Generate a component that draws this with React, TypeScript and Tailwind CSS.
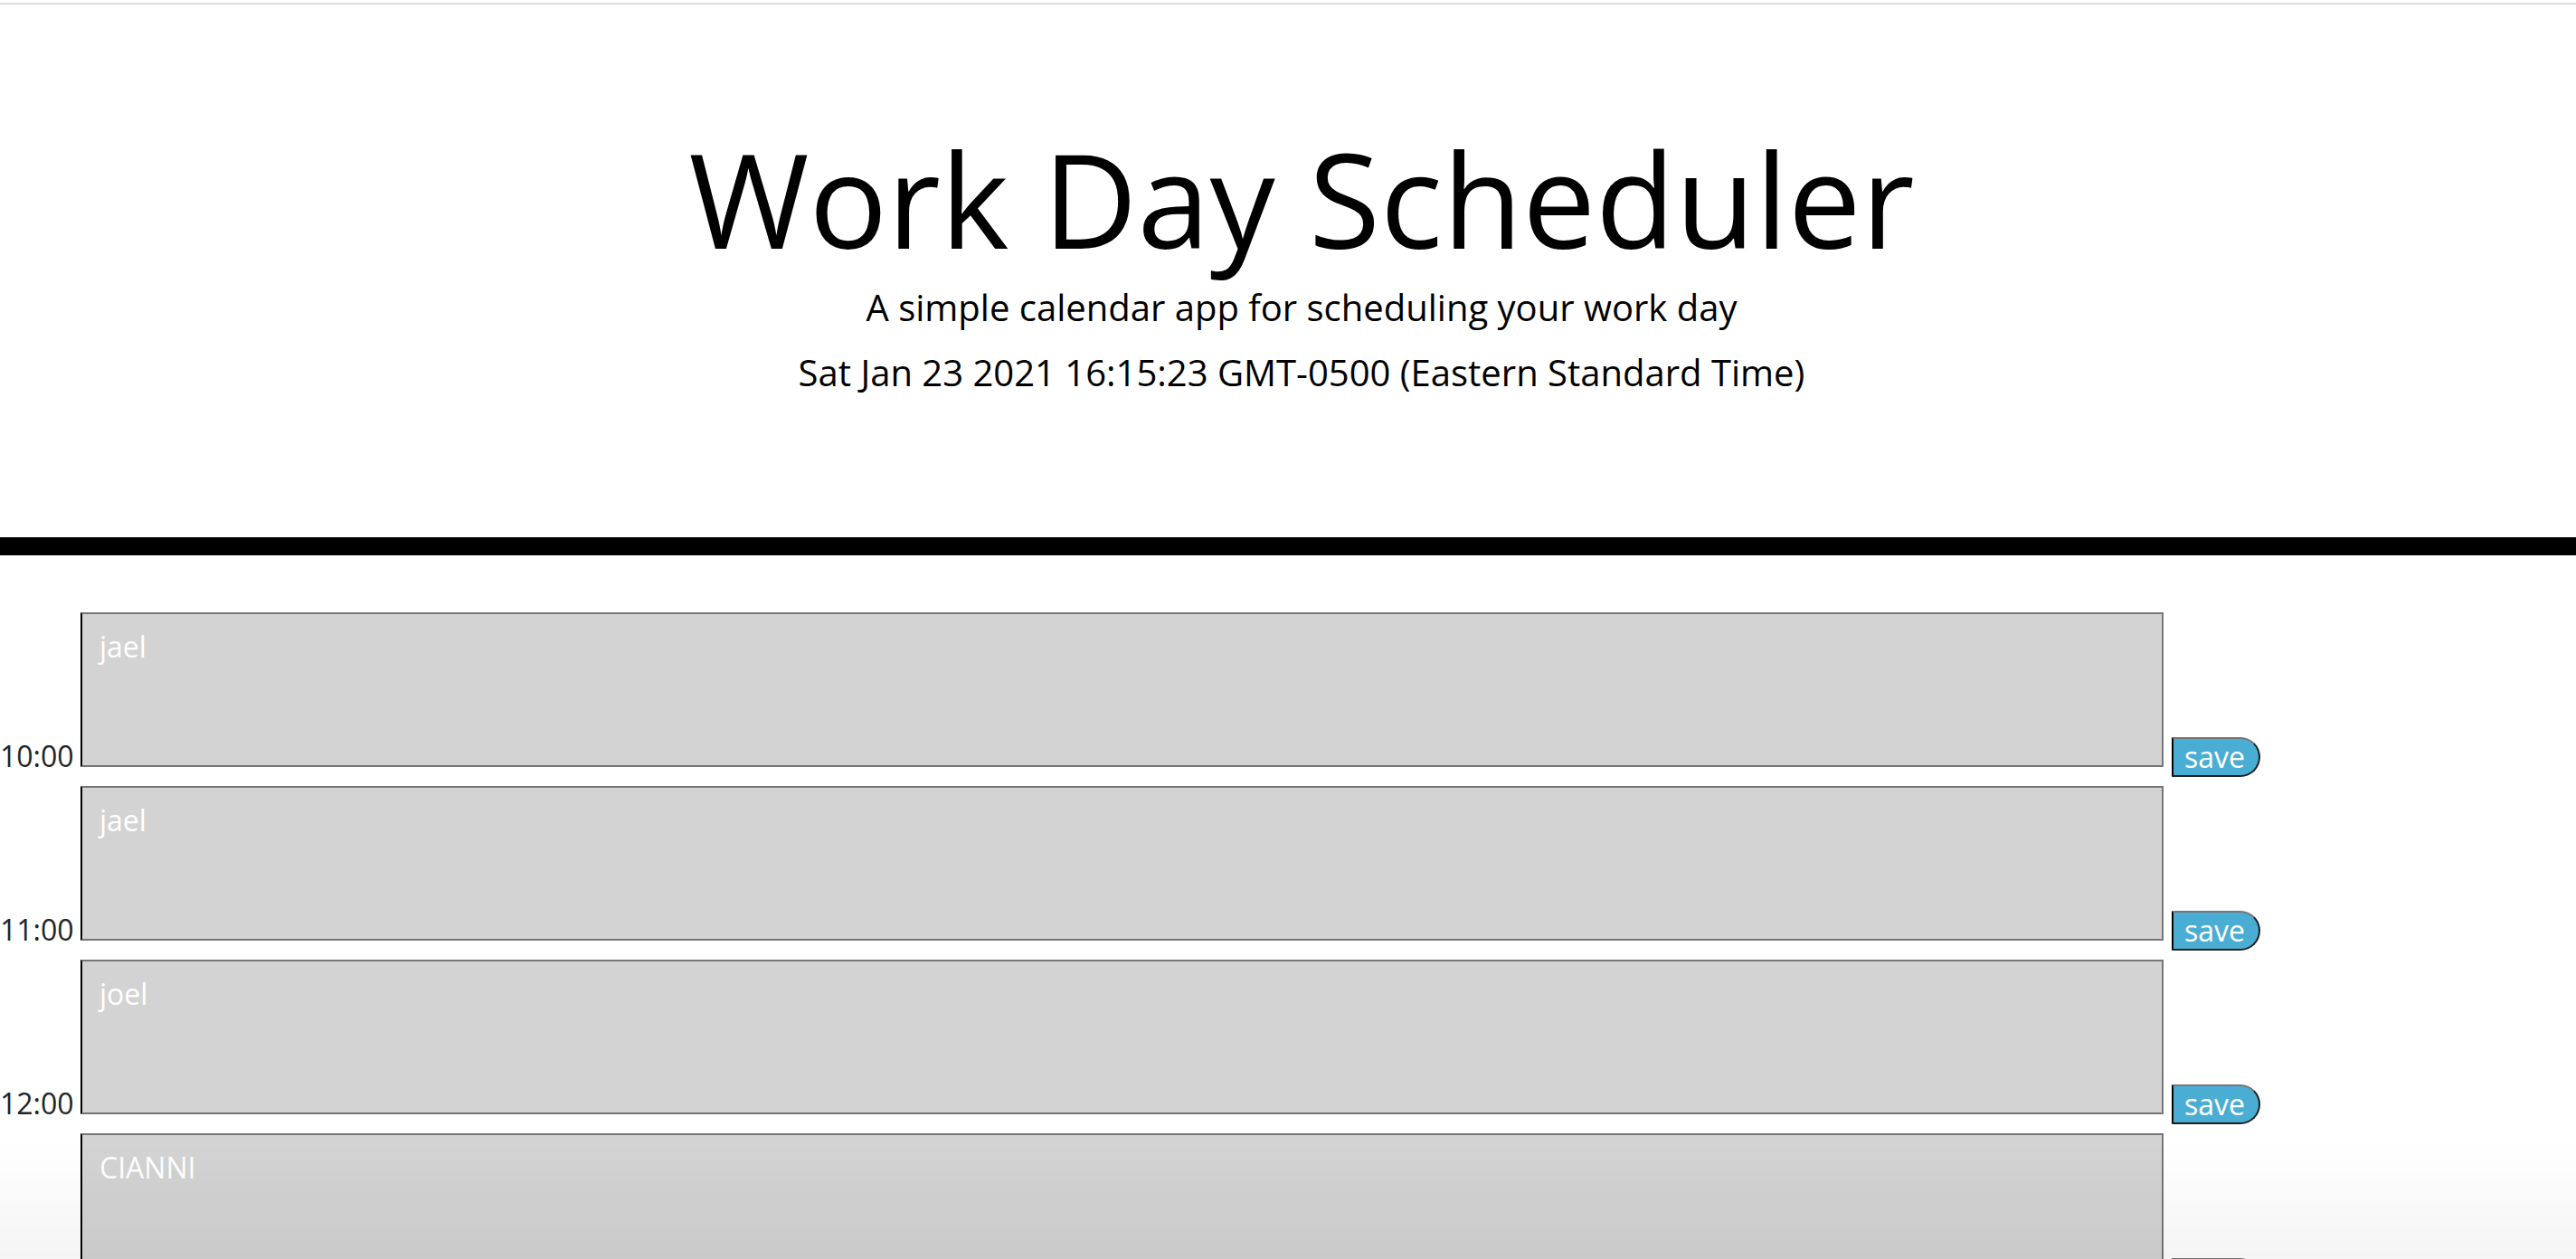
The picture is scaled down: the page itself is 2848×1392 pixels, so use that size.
import { useState } from "react";

const HOURS = [
  { hour: 10, text: "jael" },
  { hour: 11, text: "jael" },
  { hour: 12, text: "joel" },
  { hour: 13, text: "CIANNI" },
  { hour: 14, text: "" },
  { hour: 15, text: "" },
  { hour: 16, text: "" },
  { hour: 17, text: "" },
];

function HourRow({ hour, text }: { hour: number; text: string }) {
  const [value, setValue] = useState(text);

  return (
    <div className="flex items-end h-[171px]">
      <div className="w-[89px] shrink-0 mb-[-12px] text-[32px] leading-[48px] text-[#212529]">
        {hour}:00
      </div>
      <textarea
        value={value}
        onChange={(e) => setValue(e.target.value)}
        className="w-[2303px] h-[171px] shrink-0 resize-none bg-[#d3d3d3] text-white text-[32px] leading-[48px] pl-[19px] pt-[12px] border-2 border-[#767676] border-l-black outline-none"
      />
      <button
        type="button"
        className="ml-[9px] mb-[-11px] w-[98px] h-[44px] shrink-0 bg-[#4aadd4] text-white text-[32px] leading-[40px] text-left pl-[12px] border-2 border-t-[#767676] border-l-black border-r-[#1e1e1e] border-b-[#1e1e1e] rounded-r-[30px]"
      >
        save
      </button>
    </div>
  );
}

export default function App() {
  return (
    <div className="min-h-screen bg-white font-['Open_Sans',sans-serif]">
      <div className="h-[3px]" />
      <div className="h-[2px] bg-[#dcdce0]" />

      <header className="pt-[128px] pb-[152px] pl-[30px] text-center text-black border-b-[20px] border-black">
        <h1 className="text-[144px] leading-[172.8px] font-normal mb-[4px]">
          Work Day Scheduler
        </h1>
        <p className="text-[40px] leading-[60px] mb-[12px]">
          A simple calendar app for scheduling your work day
        </p>
        <p className="text-[40px] leading-[60px]">
          Sat Jan 23 2021 16:15:23 GMT-0500 (Eastern Standard Time)
        </p>
      </header>

      <main className="pt-[63px] pb-[64px] flex flex-col gap-[21px]">
        {HOURS.map((row) => (
          <HourRow key={row.hour} hour={row.hour} text={row.text} />
        ))}
      </main>

      <div className="pointer-events-none fixed bottom-0 left-0 right-0 h-[130px] bg-gradient-to-b from-transparent to-black/[0.04]" />
    </div>
  );
}
